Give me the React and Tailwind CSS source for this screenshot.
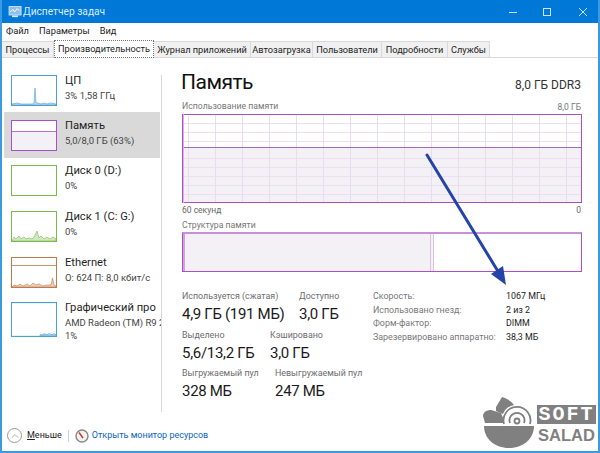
import { ChevronUp } from 'lucide-react'

const sans = "font-['Roboto','Noto_Sans',sans-serif]"

const tabs = [
  { name: 'Процессы', w: 'w-[52px]' },
  { name: 'Производительность', w: 'w-[100px]', active: true },
  { name: 'Журнал приложений', w: 'w-[97px]' },
  { name: 'Автозагрузка', w: 'w-[62px]' },
  { name: 'Пользователи', w: 'w-[69px]' },
  { name: 'Подробности', w: 'w-[66px]' },
  { name: 'Службы', w: 'w-[42px]' },
]

function Thumb({ color, fill, h = 'h-[31px]', lineY, spark }) {
  return (
    <svg viewBox="0 0 46 31" preserveAspectRatio="none" className={`${h} w-[46px] shrink-0`}>
      <rect x="0.5" y="0.5" width="45" height="30" fill="white" stroke={color} />
      {fill && <rect x="1" y="12" width="44" height="18" fill={fill} />}
      {lineY && <line x1="0" x2="46" y1={lineY} y2={lineY} stroke={color} strokeOpacity="0.8" />}
      {spark && <path d={spark} fill={color} fillOpacity="0.35" stroke={color} strokeWidth="0.6" />}
    </svg>
  )
}

const cpuSpark = 'M1 30 L1 29 L6 28 L10 29 L20 29 L22 29 L23 28 L24 13 L25 28 L27 28 L30 29 L33 28 L36 29 L40 28 L45 29 L45 30 Z'
const diskSpark = 'M1 30 L3 26 L5 28 L8 25 L10 28 L13 26 L15 28 L18 27 L21 28 L23 26 L26 20 L28 27 L30 25 L33 28 L36 26 L39 28 L42 26 L45 28 L45 30 Z'
const netSpark = 'M1 30 L3 28 L6 29 L9 27 L12 29 L16 27 L19 29 L22 26 L25 28 L28 27 L32 29 L36 28 L40 28 L41.5 21 L43 28 L45 29 L45 30 Z'
const gpuSpark = 'M29 30 L29 29 L33 29 L33 28 L36 29 L38 28 L41 29 L43 28 L45 29 L45 30 Z'

function SideItem({ title, lines, selected, className, thumb }) {
  return (
    <div className={`flex items-start gap-[8px] overflow-hidden ${selected ? 'h-[46px] bg-[#d9d9d9] py-[8px] pl-[7px]' : 'pl-[9px]'} ${className ?? ''}`}>
      {thumb}
      <div className="-mt-[3px] shrink-0 whitespace-nowrap text-[#1f1f1f]">
        <div className="text-[11.2px] leading-[17px]">{title}</div>
        {lines.map((l) => (
          <div key={l} className="text-[9.5px] leading-[13px] text-[#444]">{l}</div>
        ))}
      </div>
    </div>
  )
}

function UsageGraph() {
  const xs = [6.5, 33.5, 60.5, 87.5, 114.5, 141.5, 168.5, 195.5, 222.5, 249.5, 276.5, 303.5, 330.5, 357.5, 384.5]
  const ys = [9.5, 18.5, 27.5, 44.5, 53.5, 62.5, 71.5, 80.5]
  return (
    <svg viewBox="0 0 400 89" className="block h-[89px] w-[400px]">
      <rect x="0" y="0" width="400" height="89" fill="white" />
      <rect x="0" y="33" width="400" height="56" fill="#f3f1f5" />
      {ys.map((y) => <line key={y} x1="0" x2="400" y1={y} y2={y} stroke="#ecdff0" />)}
      {xs.map((x) => <line key={x} x1={x} x2={x} y1="0" y2="89" stroke="#e8dcee" />)}
      <line x1="0" x2="400" y1="33.5" y2="33.5" stroke="#a56ab8" />
      <rect x="0.5" y="0.5" width="399" height="88" fill="none" stroke="#a94fc7" />
      <line x1="1.5" x2="1.5" y1="0" y2="89" stroke="#d9b5e6" />
    </svg>
  )
}

function Stat({ label, value, className }) {
  return (
    <div className={`whitespace-nowrap ${className ?? ''}`}>
      <div className="text-[8.9px] leading-[13px] text-[#6d6d6d]">{label}</div>
      <div className="mt-[1px] text-[15px] leading-[20px] tracking-[-0.3px] text-[#1a1a1a]">{value}</div>
    </div>
  )
}

function Watermark() {
  return (
    <div className="absolute left-[481px] top-[395px] flex items-start gap-[2px]">
      <svg viewBox="0 0 54 54" className="h-[54px] w-[54px]">
        <g fill="#808080">
          <path d="M2 21 C2 17 6 15 10 15 L20 18 L24 28 L4 28 Z" />
          <path d="M15 12 L21 2 C27 4 31 7 33 10 C28 11 24 14 22 19 L15 16 Z" />
          <path d="M3 31 L53 31 C53 43 43 53 28 53 C13 53 3 43 3 31 Z" />
        </g>
        <path d="M23 29 A13.5 13.5 0 1 1 49 29" fill="white" stroke="#808080" strokeWidth="1.8" />
        <path d="M29 28 A7.5 7.5 0 1 1 43 28" fill="none" stroke="#808080" strokeWidth="1.8" />
        <circle cx="36" cy="26" r="2.5" fill="none" stroke="#808080" strokeWidth="1.8" />
      </svg>
      <div className="mt-[10px] flex w-[59px] flex-col">
        <div className="flex h-[19px] items-center justify-center bg-[#808080] font-['Liberation_Mono',monospace] text-[20px] font-bold tracking-[2px] text-white">SOFT</div>
        <div className="mt-[2px] text-center font-['Liberation_Sans',sans-serif] text-[16.5px] font-bold leading-[18px] text-[#808080]">SALAD</div>
      </div>
    </div>
  )
}

export default function App() {
  return (
    <div className={`relative flex h-[453px] w-[600px] flex-col overflow-hidden border-x-2 border-b-2 border-[#3c9ae0] bg-white ${sans}`}>
      {/* Title bar */}
      <div className="-mx-[2px] flex h-[23px] shrink-0 items-center bg-[#0078d7] pl-[8px] text-white">
        <svg viewBox="0 0 16 14" className="h-[12px] w-[15px]">
          <rect x="0.5" y="0.5" width="14" height="10" fill="#8fbfe6" stroke="#d5e8f7" />
          <path d="M2 7 L5 4 L7 7 L10 3 L13 6" fill="none" stroke="#ffffff" />
          <rect x="4" y="11" width="7" height="2" fill="#d5e8f7" />
        </svg>
        <span className="text-[10.2px] text-[#d9ecfb]">Диспетчер задач</span>
        <div className="ml-auto flex items-center">
          <svg viewBox="0 0 10 10" className="mr-[24px] h-[10px] w-[10px]"><line x1="1" x2="9" y1="5.5" y2="5.5" stroke="#cfe6f8" /></svg>
          <svg viewBox="0 0 10 10" className="mr-[26px] h-[10px] w-[10px]"><rect x="1.5" y="1.5" width="7" height="7" fill="none" stroke="#cfe6f8" /></svg>
          <svg viewBox="0 0 10 10" className="mr-[12px] h-[10px] w-[10px]"><path d="M1 1 L9 9 M9 1 L1 9" stroke="#cfe6f8" /></svg>
        </div>
      </div>

      {/* Menu */}
      <div className="flex h-[14px] shrink-0 items-center gap-[10px] pl-[4px] pt-[2px] text-[9.3px] text-[#222]">
        <span>Файл</span>
        <span>Параметры</span>
        <span>Вид</span>
      </div>

      {/* Tabs */}
      <div className="mt-[4px] flex h-[17px] shrink-0 items-end border-b border-[#d9d9d9]">
        {tabs.map((t) => (
          <div
            key={t.name}
            className={`flex items-center justify-center whitespace-nowrap text-[9.2px] text-[#222] ${t.w} ${
              t.active
                ? 'relative z-10 -mb-px h-[18px] border border-dotted border-[#777] bg-white'
                : 'h-[16px] border-r border-t border-[#d9d9d9] bg-[#f0f0f0]'
            }`}
          >
            {t.name}
          </div>
        ))}
      </div>

      {/* Body */}
      <div className="flex min-h-0 flex-1">
        <div className="flex w-[160px] shrink-0 flex-col pt-[17px]">
          <div className="relative flex flex-1 flex-col border-r border-[#d9d9d9]">
            <SideItem title="ЦП" lines={['3% 1,58 ГГц']} thumb={<Thumb color="#4a9fd4" spark={cpuSpark} />} />
            <SideItem className="mt-[6px] mr-px ml-[2px]" selected title="Память" lines={['5,0/8,0 ГБ (63%)']} thumb={<Thumb color="#a94fc7" fill="#f3f1f5" lineY="11.5" />} />
            <SideItem className="mt-[7px]" title="Диск 0 (D:)" lines={['0%']} thumb={<Thumb color="#7ab94e" />} />
            <SideItem className="mt-[15px]" title="Диск 1 (C: G:)" lines={['0%']} thumb={<Thumb color="#7ab94e" spark={diskSpark} />} />
            <SideItem className="mt-[15px]" title="Ethernet" lines={['О: 624 П: 8,0 кбит/с']} thumb={<Thumb color="#c07a4a" lineY="8.5" spark={netSpark} />} />
            <SideItem className="mt-[14px]" title="Графический про" lines={['AMD Radeon (TM) R9 200', '1%']} thumb={<Thumb color="#4a9fd4" h="h-[35px]" spark={gpuSpark} />} />
          </div>
          <div className="h-[39px] shrink-0" />
        </div>

        <div className="flex min-w-0 flex-1 flex-col pl-[20px] pr-[17px] pt-[10px]">
          <div className="flex h-[29px] items-end justify-between">
            <div className="-ml-[1px] text-[21px] leading-[29px] tracking-[-0.5px] text-[#111]">Память</div>
            <div className="pb-[4px] text-[12px] leading-[15px] text-[#333]">8,0 ГБ DDR3</div>
          </div>
          <div className="mt-[3px] flex h-[14px] items-center justify-between text-[8.7px] text-[#777]">
            <span>Использование памяти</span>
            <span className="text-[8.5px]">8,0 ГБ</span>
          </div>
          <UsageGraph />
          <div className="mt-[1px] flex h-[13px] items-center justify-between text-[8.5px] text-[#666]">
            <span>60 секунд</span>
            <span>0</span>
          </div>
          <div className="mt-[1px] h-[14px] text-[8.7px] leading-[14px] text-[#777]">Структура памяти</div>
          <div className="flex h-[40px] w-[400px] border border-t-2 border-[#a94fc7] border-t-[#c98fdb]">
            <div className="w-[247px] border-l-2 border-[#cfa3dd] bg-[#f3f1f5]" />
            <div className="w-[4px] border-x border-[#d9c4e0] bg-[#f3f1f5]" />
            <div className="flex-1 bg-white" />
          </div>

          <div className="mt-[18px] flex">
            <div className="w-[191px] shrink-0">
              <div className="flex">
                <Stat label="Используется (сжатая)" value="4,9 ГБ (191 МБ)" className="w-[117px]" />
                <Stat label="Доступно" value="3,0 ГБ" />
              </div>
              <div className="mt-[5px] flex">
                <Stat label="Выделено" value="5,6/13,2 ГБ" className="w-[88px]" />
                <Stat label="Кэшировано" value="3,0 ГБ" />
              </div>
              <div className="mt-[4px] flex">
                <Stat label="Выгружаемый пул" value="328 МБ" className="w-[93px]" />
                <Stat label="Невыгружаемый пул" value="247 МБ" />
              </div>
            </div>
            <div className="grid grid-cols-[133px_1fr] auto-rows-[13.5px] whitespace-nowrap text-[8.9px] leading-[13.5px] text-[#222]">
              <span className="text-[#777]">Скорость:</span><span>1067 МГц</span>
              <span className="text-[#777]">Использовано гнезд:</span><span>2 из 2</span>
              <span className="text-[#777]">Форм-фактор:</span><span>DIMM</span>
              <span className="text-[#777]">Зарезервировано аппаратно:</span><span>38,3 МБ</span>
            </div>
          </div>
        </div>
      </div>

      {/* Footer */}
      <div className="absolute bottom-[2px] left-[5px] flex h-[27px] items-center text-[9px]">
        <div className="flex h-[15px] w-[15px] items-center justify-center rounded-full border border-[#999]">
          <ChevronUp size={12} strokeWidth={1.2} color="#777" />
        </div>
        <span className="ml-[5px] text-[#222]"><u>М</u>еньше</span>
        <div className="ml-[6px] h-[12px] w-px bg-[#d0d0d0]" />
        <svg viewBox="0 0 14 14" className="ml-[6px] h-[14px] w-[14px]">
          <circle cx="7" cy="7" r="6" fill="#f2f2f2" stroke="#888" strokeWidth="1.4" />
          <path d="M4 3.5 L8 9" stroke="#c8382e" strokeWidth="1.4" />
        </svg>
        <span className="ml-[3px] text-[#0a63c4]">Открыть монитор ресурсов</span>
      </div>

      {/* Arrow annotation */}
      <svg viewBox="0 0 600 453" className="pointer-events-none absolute -left-[2px] top-0 h-[453px] w-[600px]">
        <line x1="427" y1="155" x2="499" y2="273" stroke="#2544a8" strokeWidth="3" strokeLinecap="round" />
        <path d="M491 274 L503 266 L506 285 Z" fill="#2544a8" />
      </svg>

      <div className="absolute -left-[2px] top-0"><Watermark /></div>
    </div>
  )
}
